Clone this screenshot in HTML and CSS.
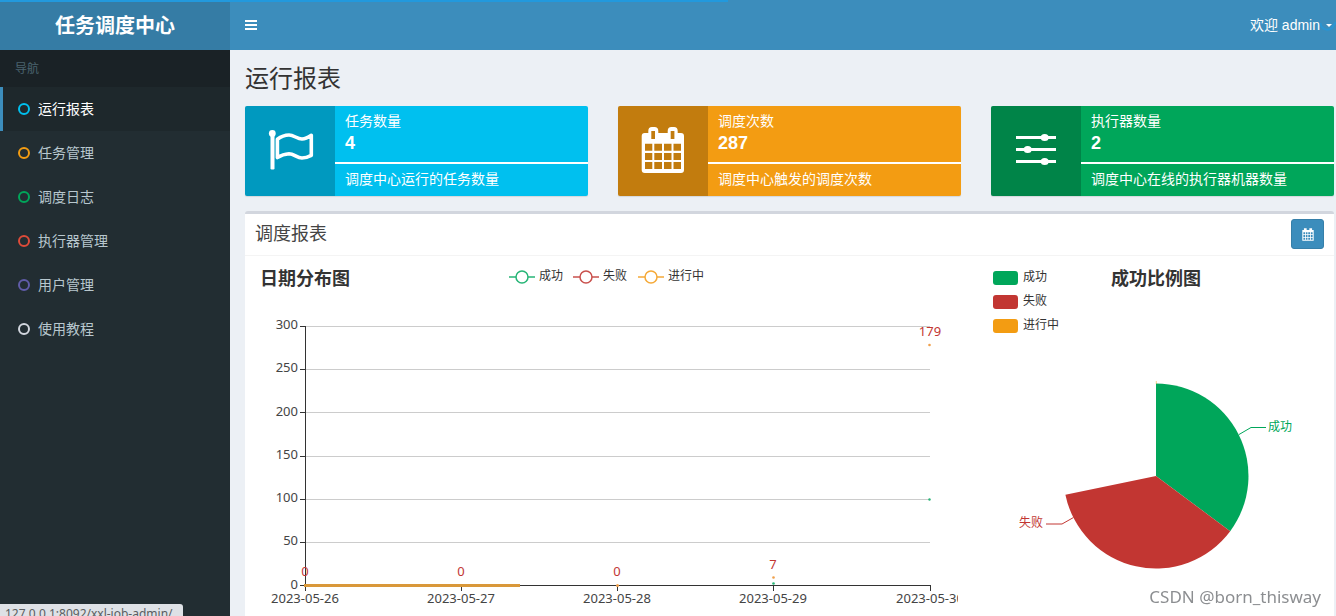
FILE: index.html
```html
<!DOCTYPE html>
<html lang="zh-CN">
<head>
<meta charset="utf-8">
<title>任务调度中心</title>
<link rel="stylesheet" href="styles.css">
</head>
<body>
<div class="load-bar"></div>
<header class="main-header">
  <a class="logo" href="#">任务调度中心</a>
  <nav class="navbar">
    <button class="toggle" type="button" aria-label="导航">
      <svg width="12" height="12" viewBox="0 0 12 12"><path d="M0 1h12M0 5h12M0 9h12" stroke="#fff" stroke-width="2"/></svg>
    </button>
    <button class="user" type="button">欢迎 admin<span class="caret"></span></button>
    <svg class="spinner" width="18" height="18" viewBox="0 0 18 18"><path d="M1.5 10A7 7 0 0 0 13 15L17 9" fill="none" stroke="#2299dd" stroke-width="2"/></svg>
  </nav>
</header>
<div class="wrapper">
  <aside class="sidebar">
    <div class="nav-title">导航</div>
    <ul class="menu">
      <li><a class="active" href="#"><i class="ring aqua"></i>运行报表</a></li>
      <li><a href="#"><i class="ring yellow"></i>任务管理</a></li>
      <li><a href="#"><i class="ring green"></i>调度日志</a></li>
      <li><a href="#"><i class="ring red"></i>执行器管理</a></li>
      <li><a href="#"><i class="ring purple"></i>用户管理</a></li>
      <li><a href="#"><i class="ring gray"></i>使用教程</a></li>
    </ul>
  </aside>
  <main class="content">
    <h1>运行报表</h1>
    <section class="cards">
      <div class="card bg-aqua">
        <div class="card-icon">
          <svg width="90" height="90" viewBox="0 0 90 90"><circle cx="27.3" cy="27.5" r="3.4" fill="#fff"/><path d="M25.5 28h4v35q-2 1-4 0z" fill="#fff"/><path d="M32.4 33.2Q38 29 44 29C49 29 52 33 57 33Q61 33 66.3 29.3V49.3Q61 52 57 52C52 52 49 47.7 44 47.7Q38 48 32.4 51.6Z" fill="none" stroke="#fff" stroke-width="3.6" stroke-linejoin="round"/></svg>
        </div>
        <div class="card-body">
          <span>任务数量</span><strong>4</strong>
          <div class="line"></div><span>调度中心运行的任务数量</span>
        </div>
      </div>
      <div class="card bg-yellow">
        <div class="card-icon">
          <svg width="90" height="90" viewBox="0 0 90 90"><path fill="#fff" fill-rule="evenodd" d="M26.700 27H30.300V25Q30.300 21 34 21H36.500Q40.300 21 40.300 25V27H49.700V25Q49.700 21 53.400 21H56Q59.700 21 59.700 25V27H63Q66 27 66 30V64Q66 67 63 67H26.700Q23.700 67 23.700 64V30Q23.700 27 26.700 27ZM33.300 25V33H37V25ZM52.700 25V33H56.400V25ZM27 37.700V44.700H34.300V37.700ZM36.300 37.700V44.700H44V37.700ZM46 37.700V44.700H53.500V37.700ZM55.500 37.700V44.700H63V37.700ZM27 47V54H34.300V47ZM36.300 47V54H44V47ZM46 47V54H53.500V47ZM55.500 47V54H63V47ZM27 56V63H34.300V56ZM36.300 56V63H44V56ZM46 56V63H53.500V56ZM55.500 56V63H63V56Z"/></svg>
        </div>
        <div class="card-body">
          <span>调度次数</span><strong>287</strong>
          <div class="line"></div><span>调度中心触发的调度次数</span>
        </div>
      </div>
      <div class="card bg-green">
        <div class="card-icon">
          <svg width="90" height="90" viewBox="0 0 90 90" fill="#fff"><path d="M25 30h40v3H25zM25 42h40v3H25zM25 54h40v3H25z"/><ellipse cx="53.700" cy="31.500" rx="4" ry="3.500"/><ellipse cx="36.700" cy="43.500" rx="4" ry="3.500"/><ellipse cx="53.700" cy="55.500" rx="4" ry="3.500"/></svg>
        </div>
        <div class="card-body">
          <span>执行器数量</span><strong>2</strong>
          <div class="line"></div><span>调度中心在线的执行器机器数量</span>
        </div>
      </div>
    </section>
    <section class="box">
      <div class="box-header">
        <h2>调度报表</h2>
        <button class="date-btn" type="button" aria-label="日期">
          <svg width="12" height="13" viewBox="23 20 44 48"><path fill="#fff" fill-rule="evenodd" d="M24 27H30V21H40V27H50V21H60V27H66V67H24ZM28 36V43H34V36ZM37 36V43H43V36ZM46 36V43H53V36ZM56 36V43H62V36ZM28 46V53H34V46ZM37 46V53H43V46ZM46 46V53H53V46ZM56 46V53H62V46ZM28 56V63H34V56ZM37 56V63H43V56ZM46 56V63H53V56ZM56 56V63H62V56Z"/></svg>
        </button>
      </div>
      <div class="charts">
        <svg class="chart" viewBox="255 256 703 360">
          <text class="chart-title" x="260" y="285">日期分布图</text>
          <g class="legend">
            <g stroke="#26b576"><path d="M509 277h26"/><circle cx="522" cy="277" r="6"/></g>
            <g stroke="#c9504c"><path d="M573 277h26"/><circle cx="586" cy="277" r="6"/></g>
            <g stroke="#f5a937"><path d="M638 277h26"/><circle cx="651" cy="277" r="6"/></g>
          </g>
          <g class="label"><text x="539" y="280">成功</text><text x="603" y="280">失败</text><text x="668" y="280">进行中</text></g>
          <path d="M306 326.500H930M306 369.500H930M306 412.500H930M306 456.500H930M306 499.500H930M306 542.500H930" stroke="#ccc"/>
          <path d="M305.500 326V591M300 326.500h5M300 369.500h5M300 412.500h5M300 456.500h5M300 499.500h5M300 542.500h5M300 585.500H931M461.500 585v6M617.500 585v6M773.500 585v6M930.500 585v6" stroke="#333" fill="none"/>
          <g class="axis end"><text x="298" y="329">300</text><text x="298" y="372">250</text><text x="298" y="416">200</text><text x="298" y="459">150</text><text x="298" y="502">100</text><text x="298" y="545">50</text><text x="298" y="589">0</text></g>
          <g class="axis mid"><text x="305" y="603">2023-05-26</text><text x="461" y="603">2023-05-27</text><text x="617" y="603">2023-05-28</text><text x="773" y="603">2023-05-29</text><text x="930" y="603">2023-05-30</text></g>
          <path d="M304 585.500H520" stroke="#d9983a" stroke-width="3"/>
          <g fill="#f0a04b"><circle cx="617.500" cy="585.500" r="1.500"/><circle cx="773.500" cy="577.500" r="1.300"/><circle cx="929.500" cy="345" r="1.300"/></g>
          <g fill="#26b576"><circle cx="773.500" cy="583.500" r="1.300"/><circle cx="929.500" cy="499.500" r="1.200"/></g>
          <g class="axis mid value"><text x="305" y="576">0</text><text x="461" y="576">0</text><text x="617" y="576">0</text><text x="773" y="569">7</text><text x="930" y="336">179</text></g>
        </svg>
        <svg class="chart" viewBox="958 256 376 360">
          <rect x="993" y="271" width="25" height="14" rx="3" fill="#00a65a"/>
          <rect x="993" y="295" width="25" height="14" rx="3" fill="#c23632"/>
          <rect x="993" y="319" width="25" height="14" rx="3" fill="#f39c12"/>
          <g class="label"><text x="1023" y="281">成功</text><text x="1023" y="305">失败</text><text x="1023" y="329">进行中</text></g>
          <text class="chart-title" x="1111" y="285">成功比例图</text>
          <path d="M1156 476V383.500A92.500 92.500 0 0 1 1230.200 531.200Z" fill="#00a65a"/>
          <path d="M1156 476L1230.200 531.200A92.500 92.500 0 0 1 1065.400 494.700Z" fill="#c23632"/>
          <path d="M1156.300 381v3" stroke="#f39c12" stroke-opacity=".5"/>
          <path d="M1239 434.500L1251 427.500H1266" fill="none" stroke="#00a65a"/>
          <path d="M1073.500 517.500L1062 524H1046" fill="none" stroke="#c23632"/>
          <g class="label"><text class="ok" x="1268" y="431">成功</text><text class="fail" x="1019" y="527">失败</text></g>
        </svg>
      </div>
    </section>
  </main>
</div>
<div class="status">127.0.0.1:8092/xxl-job-admin/</div>
<div class="watermark">CSDN @born_thisway</div>
</body>
</html>
```
FILE: styles.css
```css
* { box-sizing: border-box; }
body {
  margin: 0;
  height: 100vh;
  overflow: hidden;
  display: flex;
  flex-direction: column;
  background: #ecf0f5;
  color: #333;
  font: 14px/20px "Liberation Sans", "Noto Sans CJK SC", sans-serif;
}
a { text-decoration: none; }
button { font: inherit; border: 0; cursor: pointer; }
.load-bar {
  position: fixed;
  z-index: 10;
  top: 0;
  left: 0;
  width: 54.500%;
  height: 2px;
  background: #2299dd;
}
.main-header { display: flex; flex: none; height: 50px; }
.logo {
  width: 230px;
  padding-top: 1px;
  background: #357ca5;
  color: #fff;
  font-size: 20px;
  font-weight: bold;
  line-height: 50px;
  text-align: center;
}
.navbar {
  position: relative;
  flex: 1;
  display: flex;
  justify-content: space-between;
  background: #3c8dbc;
}
.toggle { display: flex; align-items: center; padding: 2px 15px 0; background: none; }
.user {
  display: flex;
  align-items: center;
  gap: 6px;
  padding: 0 4px 0 15px;
  background: none;
  color: #fff;
}
.caret { border: 3px solid transparent; border-top-color: #fff; border-bottom: 0; }
.spinner { position: absolute; top: 13px; right: -1px; opacity: .7; }
.wrapper { flex: 1; display: flex; min-height: 0; }
.sidebar { flex: none; width: 230px; background: #222d32; }
.nav-title {
  padding: 9px 15px 8px;
  background: #1a2226;
  color: #4b646f;
  font-size: 12px;
}
.menu { margin: 0; padding: 0; list-style: none; }
.menu a {
  display: flex;
  align-items: center;
  gap: 8px;
  padding: 12px 15px;
  border-left: 3px solid transparent;
  color: #b8c7ce;
}
.menu .active { background: #1e282c; border-color: #3c8dbc; color: #fff; }
.ring { width: 12px; height: 12px; border: 2px solid; border-radius: 50%; }
.aqua { color: #00c0ef; }
.yellow { color: #f39c12; }
.green { color: #00a65a; }
.red { color: #dd4b39; }
.purple { color: #605ca8; }
.gray { color: #d2d6de; }
.content { flex: 1; min-width: 0; padding: 15px 2px 0 15px; }
h1 { margin: 0 0 13px; font-size: 24px; font-weight: 400; line-height: 28px; }
.cards { display: grid; grid-template-columns: repeat(3, 1fr); gap: 30px; }
.card {
  display: flex;
  min-height: 90px;
  border-radius: 2px;
  overflow: hidden;
  color: #fff;
  box-shadow: 0 1px 1px rgba(0, 0, 0, .1);
}
.card-icon { flex: none; width: 90px; background: rgba(0, 0, 0, .2); }
.card-icon svg { display: block; }
.card-body { flex: 1; padding: 5px 10px; }
.card-body span, .card-body strong { display: block; }
.card-body strong { font-size: 18px; line-height: 24px; }
.line { height: 2px; margin: 7px -10px 5px; background: #fff; }
.bg-aqua { background: #00c0ef; }
.bg-yellow { background: #f39c12; }
.bg-green { background: #00a65a; }
.box {
  margin-top: 15px;
  border-top: 3px solid #d2d6de;
  border-radius: 3px 3px 0 0;
  background: #fff;
}
.box-header {
  display: flex;
  justify-content: space-between;
  align-items: center;
  padding: 5px 10px 6px;
  border-bottom: 1px solid #f4f4f4;
}
h2 { margin: 0; font-size: 18px; font-weight: 400; color: #444; }
.date-btn {
  display: flex;
  align-items: center;
  justify-content: center;
  width: 33px;
  height: 30px;
  padding: 0;
  border: 1px solid #367fa9;
  border-radius: 3px;
  background: #3c8dbc;
}
.charts { display: grid; grid-template-columns: 703fr 376fr; padding-left: 10px; }
.chart { display: block; width: 100%; overflow: hidden; }
.chart-title { font-size: 18px; font-weight: bold; fill: #333; }
.legend { fill: #fff; stroke-width: 1.500; }
.label { font-size: 12px; fill: #333; }
.label .ok { fill: #00a65a; }
.label .fail { fill: #c23632; }
.axis { font-family: "Noto Sans", sans-serif; font-size: 13px; fill: #444; }
.end { text-anchor: end; }
.mid { text-anchor: middle; }
.axis.value { fill: #c23632; }
.status {
  position: fixed;
  left: 0;
  bottom: 0;
  height: 12px;
  padding: 0 10px 0 5px;
  overflow: hidden;
  border-radius: 0 3px 0 0;
  background: #dee1e6;
  color: #5a5d61;
  font: 12px/20px "Noto Sans", sans-serif;
}
.watermark {
  position: fixed;
  right: 15px;
  bottom: 8px;
  color: #8c8e91;
  font: 17px/22px "Noto Sans", sans-serif;
  text-shadow: 1px 1px 1px #fff;
}
```
